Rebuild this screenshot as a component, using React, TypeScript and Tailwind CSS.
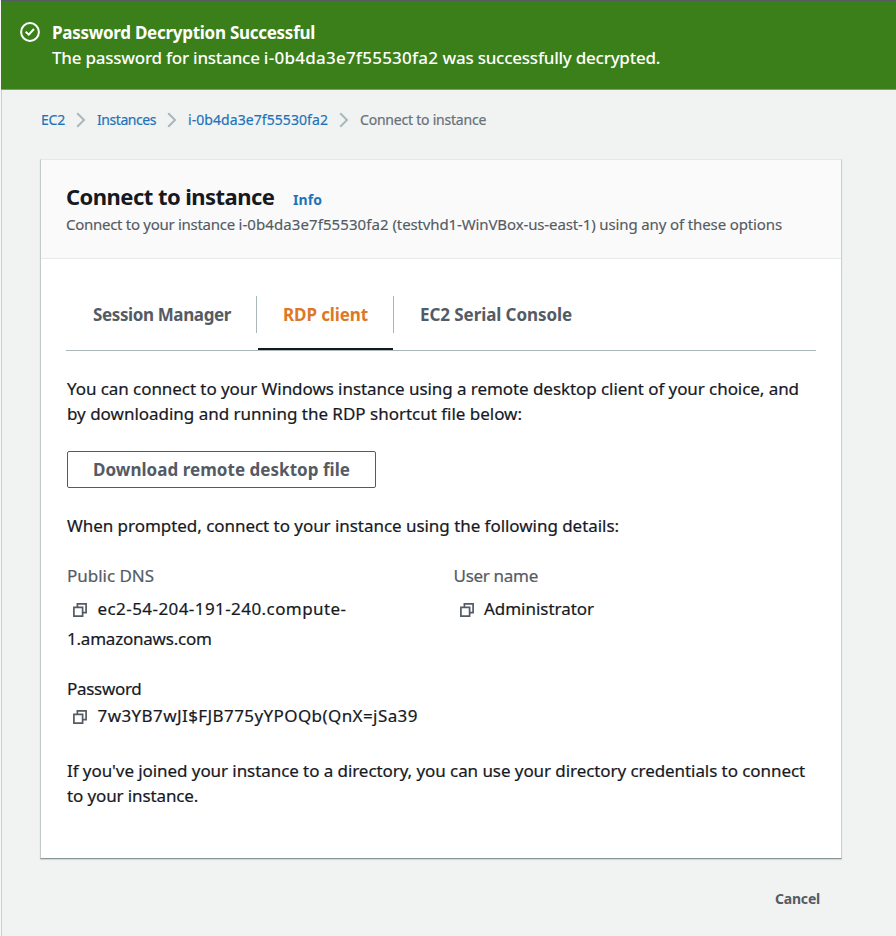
function CopyIcon() {
  return (
    <svg width="14" height="14" viewBox="0 0 14 14" fill="none" stroke="#545b64" strokeWidth="1.7" className="ml-[6px] mr-[10.5px] inline-block shrink-0 align-[-2px]">
      <path d="M0.9 4.4H9.6V13.1H0.9Z" />
      <path d="M4.4 4.4V0.9H13.1V9.6H9.6" />
    </svg>
  );
}

function Chevron() {
  return (
    <svg width="10" height="16" viewBox="0 0 10 16" fill="none" stroke="#aab7b8" strokeWidth="2" className="shrink-0">
      <path d="M1.2 1.2L8 8L1.2 14.8" />
    </svg>
  );
}

function Banner() {
  return (
    <div className="flex h-[90px] border-t border-b border-t-[#545b64] border-b-[#87938a] bg-[#3b7f1b] pt-[19px] pl-[19px] text-white">
      <svg width="20" height="20" viewBox="0 0 20 20" fill="none" stroke="currentColor" strokeWidth="2" className="mt-[2px] mr-[12px] shrink-0">
        <circle cx="10" cy="10" r="8.9" />
        <path d="M5.7 9.8L8.8 12.7L14 7" />
      </svg>
      <div className="leading-[25px]">
        <div className="font-bold tracking-[-0.275px]">Password Decryption Successful</div>
        <div className="font-medium tracking-[-0.24px]">
          The password for instance <span className="tracking-[0.25px]">i-0b4da3e7f55530fa2</span> was successfully decrypted.
        </div>
      </div>
    </div>
  );
}

function Breadcrumbs() {
  return (
    <nav className="flex h-5 items-center pl-[39px] text-sm leading-5 whitespace-nowrap text-[#1f73b8] [-webkit-text-stroke:0.2px]">
      <span className="w-[35px] tracking-[-0.2px]">EC2</span>
      <Chevron />
      <span className="ml-[11px] w-[70px] tracking-[-0.44px]">Instances</span>
      <Chevron />
      <span className="ml-[11px] w-[151px] tracking-[0.07px]">i-0b4da3e7f55530fa2</span>
      <Chevron />
      <span className="ml-[11px] tracking-[-0.22px] text-[#687078]">Connect to instance</span>
    </nav>
  );
}

function Tabs() {
  return (
    <div className="mt-[37px] ml-[25px] flex h-[55px] w-[750px] border-b border-[#aab7b8] leading-[37px] font-bold whitespace-nowrap text-[#545b64]">
      <div className="h-[37px] w-[191px] border-r border-[#aab7b8] pl-[27px] tracking-[-0.38px]">Session Manager</div>
      <div className="ml-px flex h-[54px] w-[135px] border-b-2 border-[#16191f] pl-[25px] tracking-[-0.107px] text-[#dd7826]">RDP client</div>
      <div className="h-[37px] border-l border-[#aab7b8] pl-[26px] tracking-[-0.078px]">EC2 Serial Console</div>
    </div>
  );
}

export default function App() {
  return (
    <div className="h-[936px] w-[896px] overflow-hidden border-l border-[#f7f8f8] bg-[#f1f3f3] font-['Noto_Sans',sans-serif] text-[17px] text-[#16191f]">
      <Banner />
      <div className="h-[846px] border-l border-[#c9cfcf] pt-5">
        <Breadcrumbs />
        <main className="mt-[29px] ml-[38px] h-[700px] w-[802px] border border-t-[#e3e7e7] border-r-[#c9d0d0] border-b-[#879596] border-l-[#c4cbcb] bg-white shadow-[0_1px_1px_rgba(0,28,36,0.12)]">
          <header className="h-[99px] border-b border-[#e6eaea] bg-[#fafafa] pt-[21px] pl-[25px] whitespace-nowrap">
            <div className="flex h-[30px] items-baseline leading-[30px]">
              <h1 className="w-[227px] text-[22px] font-bold tracking-[-0.54px]">Connect to instance</h1>
              <span className="text-sm leading-5 font-bold tracking-[0.07px] text-[#1f73b8]">Info</span>
            </div>
            <p className="mt-[3px] text-[15px] leading-5 tracking-[-0.124px] text-[#545b64] [-webkit-text-stroke:0.15px]">
              <span className="tracking-[-0.284px]">Connect to your instance </span>
              <span className="tracking-[0.09px]">i-0b4da3e7f55530fa2</span> (testvhd1-WinVBox-us-east-1) using any of these options
            </p>
          </header>
          <Tabs />
          <div className="mt-[25px] pl-[26px] leading-[25px] whitespace-nowrap [-webkit-text-stroke:0.2px]">
            <p className="tracking-[-0.063px]">
              You can connect to your Windows instance using a remote desktop client of your choice, and
              <br />
              <span className="tracking-[-0.013px]">by downloading and running the RDP shortcut file below:</span>
            </p>
            <button className="mt-[25px] block h-[37px] w-[309px] rounded-[2px] border border-[#545b64] pl-[25px] text-left leading-[35px] font-bold tracking-[0.039px] text-[#545b64] [-webkit-text-stroke:0]">
              Download remote desktop file
            </button>
            <p className="mt-[25px] tracking-[-0.042px]">When prompted, connect to your instance using the following details:</p>
            <div className="mt-[25px] flex">
              <div className="w-[386.5px]">
                <div className="tracking-[-0.026px] text-[#545b64]">Public DNS</div>
                <div className="mt-[6px] leading-[30px]">
                  <CopyIcon />
                  <span className="tracking-[0.43px]">ec2-54-204-191-240.compute-</span>
                  <br />
                  <span className="tracking-[-0.22px]">1.amazonaws.com</span>
                </div>
              </div>
              <div>
                <div className="tracking-[-0.3px] text-[#545b64]">User name</div>
                <div className="mt-[6px] leading-[30px]">
                  <CopyIcon />
                  <span className="tracking-[-0.033px]">Administrator</span>
                </div>
              </div>
            </div>
            <div className="mt-[21px] leading-[27px]">
              <div className="tracking-[-0.3px]">Password</div>
              <div>
                <CopyIcon />
                <span className="tracking-[0.41px]">7w3YB7wJI$FJB775yYPOQb(QnX=jSa39</span>
              </div>
            </div>
            <p className="mt-[29px] tracking-[-0.07px]">
              If you've joined your instance to a directory, you can use your directory credentials to connect
              <br />
              <span className="tracking-[-0.12px]">to your instance.</span>
            </p>
          </div>
        </main>
        <div className="mt-[30px] w-[818px] text-right text-sm leading-5 font-bold tracking-[-0.205px] text-[#545b64]">Cancel</div>
      </div>
    </div>
  );
}
